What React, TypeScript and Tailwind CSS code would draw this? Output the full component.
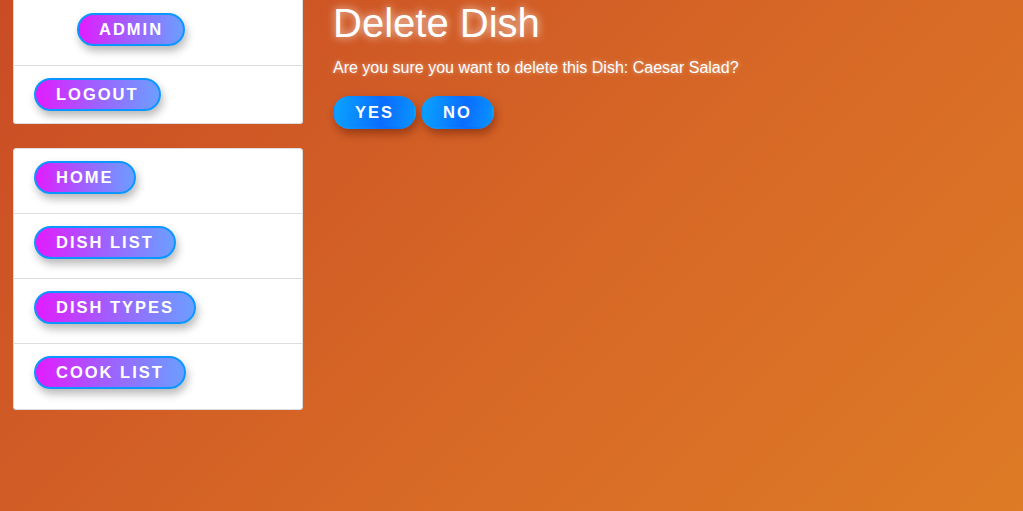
const font = { fontFamily: '"Liberation Sans", Arial, sans-serif' };

function NavButton({ label, className = '' }: { label: string; className?: string }) {
  return (
    <span
      className={`inline-flex h-[33px] items-center rounded-full border-2 border-[#0a96ff] bg-[linear-gradient(to_right,#e21cff,#a35cff_45%,#6c9eff)] px-[20px] text-[16.5px] font-bold uppercase tracking-[2px] text-white shadow-[2px_5px_8px_rgba(0,0,0,0.28)] ${className}`}
    >
      {label}
    </span>
  );
}

function BlueButton({ label }: { label: string }) {
  return (
    <button
      className="inline-flex h-[33px] items-center rounded-full border-2 border-transparent bg-[linear-gradient(100deg,#0aa4ff,#0a6cff_60%,#0a94ff)] px-[20px] text-[16.5px] font-bold uppercase tracking-[2px] text-white shadow-[2px_5px_8px_rgba(90,20,0,0.45)]"
    >
      {label}
    </button>
  );
}

function Row({
  children,
  last = false,
  h = 'h-[65px]',
  pt = 'pt-[12px]',
}: {
  children: React.ReactNode;
  last?: boolean;
  h?: string;
  pt?: string;
}) {
  return (
    <div className={`flex ${h} items-start pl-[20px] ${pt} ${last ? '' : 'border-b border-[#dddddd]'}`}>
      {children}
    </div>
  );
}

export default function App() {
  return (
    <div
      className="flex h-[511px] w-full gap-[30px] overflow-hidden bg-[linear-gradient(135deg,#c94c25,#d86a26_60%,#dd7b26)] pl-[13px]"
      style={font}
    >
      <div className="flex w-[290px] shrink-0 flex-col gap-[24px]">
        <div className="h-[124px] rounded-b-[3px] border border-t-0 border-[#dddddd] bg-white">
          <Row h="h-[66px]" pt="pt-[13px]">
            <NavButton label="Admin" className="ml-[43px]" />
          </Row>
          <Row last h="h-[57px]">
            <NavButton label="Logout" />
          </Row>
        </div>
        <div className="rounded-[3px] border border-[#dddddd] bg-white">
          <Row>
            <NavButton label="Home" />
          </Row>
          <Row>
            <NavButton label="Dish List" />
          </Row>
          <Row>
            <NavButton label="Dish Types" />
          </Row>
          <Row last>
            <NavButton label="Cook List" />
          </Row>
        </div>
      </div>

      <div className="flex flex-col">
        <h1 className="text-[40px] leading-[46px] text-white [text-shadow:0_0_8px_rgba(255,255,255,0.8)]">
          Delete Dish
        </h1>
        <p className="mt-[13px] text-[16px] leading-[18px] text-white [text-shadow:0_0_4px_rgba(255,255,255,0.5)]">
          Are you sure you want to delete this Dish: Caesar Salad?
        </p>
        <div className="mt-[19px] flex gap-[5px]">
          <BlueButton label="Yes" />
          <BlueButton label="No" />
        </div>
      </div>
    </div>
  );
}
